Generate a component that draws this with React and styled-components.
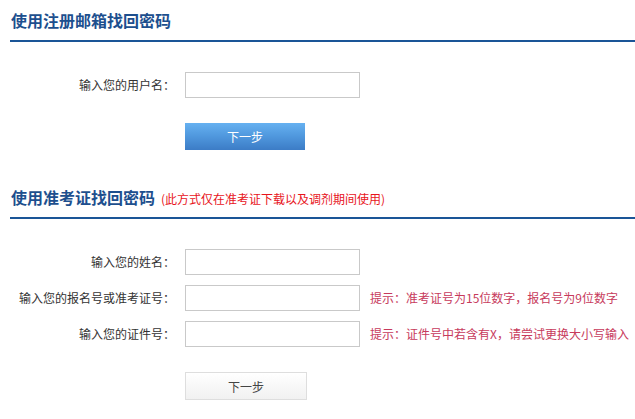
import React from "react";
import styled, { createGlobalStyle } from "styled-components";

const Global = createGlobalStyle`
  html, body { margin: 0; padding: 0; background: #fff; }
  body { font-family: "Microsoft YaHei", "Noto Sans CJK SC", "Noto Sans", sans-serif; color: #333; }
  * { box-sizing: border-box; }
`;

const Page = styled.div`
  padding: 0 0 0 10px;
  width: 635px;
`;

const Section = styled.section`
  margin-bottom: ${(p) => p.$gap || 0}px;
`;

const Title = styled.h2`
  margin: 0;
  padding: ${(p) => p.$top || 0}px 0 8px 1px;
  font-size: 16px;
  line-height: 24px;
  height: ${(p) => (p.$top || 0) + 34}px;
  font-weight: bold;
  color: #1d4f8e;
  border-bottom: 2px solid #1a5597;
`;

const Note = styled.span`
  font-size: 12px;
  font-weight: normal;
  color: #e8141c;
  margin-left: 6px;
`;

const Form = styled.div`
  display: grid;
  grid-template-columns: 165px 175px auto;
  column-gap: 10px;
  row-gap: 10px;
  margin-top: 30px;
  align-items: center;
`;

const Label = styled.label`
  font-size: 12px;
  line-height: 26px;
  height: 26px;
  color: #333;
  text-align: right;
`;

const Input = styled.input`
  width: 175px;
  height: 26px;
  border: 1px solid #c9c9c9;
  background: #fff;
  padding: 0 4px;
  font-size: 12px;
  outline: none;
`;

const Hint = styled.span`
  font-size: 12px;
  line-height: 26px;
  height: 26px;
  color: #c73a5c;
  white-space: nowrap;
`;

const ButtonRow = styled.div`
  grid-column: 2 / 4;
  display: flex;
  align-self: start;
  margin-top: ${(p) => p.$top}px;
  height: ${(p) => p.$h}px;
`;

const BlueButton = styled.button`
  width: 120px;
  height: 27px;
  border: none;
  background: linear-gradient(to bottom, #66b1f1 0%, #4f97dd 50%, #3c7cc6 100%);
  color: #fff;
  font-family: inherit;
  font-size: 12px;
  cursor: pointer;
  padding: 0;
`;

const GrayButton = styled.button`
  width: 122px;
  height: 28px;
  border: 1px solid #dedede;
  background: linear-gradient(to bottom, #ffffff 0%, #f1f1f1 100%);
  color: #444;
  font-family: inherit;
  font-size: 12px;
  cursor: pointer;
  padding: 0;
`;

export default function App() {
  return (
    <>
      <Global />
      <Page>
        <Section $gap={35}>
          <Title $top={8}>使用注册邮箱找回密码</Title>
          <Form>
            <Label>输入您的用户名：</Label>
            <Input type="text" />
            <span />
            <ButtonRow $top={15} $h={27}>
              <BlueButton>下一步</BlueButton>
            </ButtonRow>
          </Form>
        </Section>
        <Section>
          <Title>
            使用准考证找回密码<Note>(此方式仅在准考证下载以及调剂期间使用)</Note>
          </Title>
          <Form>
            <Label>输入您的姓名：</Label>
            <Input type="text" />
            <span />
            <Label>输入您的报名号或准考证号：</Label>
            <Input type="text" />
            <Hint>提示：准考证号为15位数字，报名号为9位数字</Hint>
            <Label>输入您的证件号：</Label>
            <Input type="text" />
            <Hint>提示：证件号中若含有X，请尝试更换大小写输入</Hint>
            <ButtonRow $top={15} $h={28}>
              <GrayButton>下一步</GrayButton>
            </ButtonRow>
          </Form>
        </Section>
      </Page>
    </>
  );
}
